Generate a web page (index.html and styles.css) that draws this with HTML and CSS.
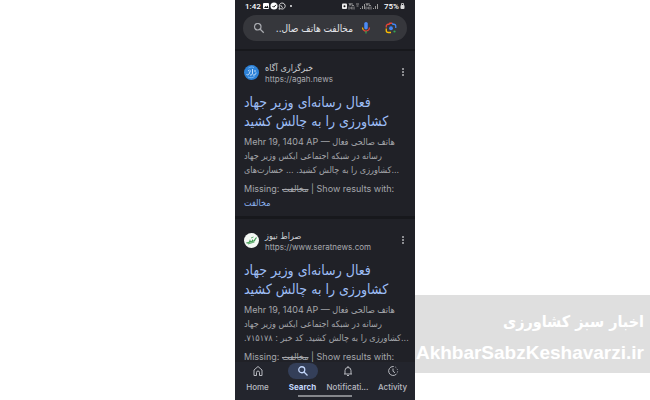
FILE: index.html
```
<!DOCTYPE html>
<html lang="en">
    <head>
        <meta charset="UTF-8" />
        <meta name="viewport" content="width=device-width, initial-scale=1.0" />
        <title>Search</title>
        <link rel="stylesheet" href="styles.css">
    </head>
    <body>
        <div class="phone">
            <header class="top">
                <div class="status">
                    <span>1:42</span>
                    <svg class="status-left" viewBox="0 0 32 8">
                        <rect x="0" y="1" width="6" height="6" rx="1" fill="#fff" />
                        <path d="M1 6l1.500-2 1 1 1-1.500L5.500 6z" fill="#111" />
                        <circle cx="11" cy="4" r="3.500" fill="#fff" />
                        <path d="M9.500 4l1.200 1.200L13 2.800" fill="none" stroke="#111" />
                        <path d="M16 7.200l.5-1.800a3 3 0 1 1 1.300 1.300z" fill="none" stroke="#fff" stroke-width=".8" />
                        <path d="M17.800 3c.2 1.500 1 2.200 2.200 2.400" fill="none" stroke="#fff" stroke-width=".8" />
                        <circle cx="28" cy="4" r=".9" fill="#fff" />
                    </svg>
                    <svg class="status-right" viewBox="0 0 40 8">
                        <rect x="0" y="1.500" width="5" height="5.500" rx="1" fill="#eee" />
                        <circle cx="2.500" cy="4.300" r="1" fill="#111" />
                        <g fill="none" stroke="#aaa" stroke-width=".8">
                            <path d="M7 1l1 2.500L9 1M10 1v2.500h2M7 4.500v3M8 6h2M10 4.500v3M12 4.500v3" />
                            <path d="M14 2h3M14.500 4h2" />
                            <path d="M24 1l1 2.500L26 1M27 1v2.500h2M24 4.500v3M25 6h2M27 4.500v3M29 4.500v3" />
                        </g>
                        <path d="M18 7h1V6h-1zM20 7h1V4h-1zM22 7h1V2h-1zM31 7h1V6h-1zM33 7h1V4h-1zM35 7h1V2h-1z" fill="#999" />
                    </svg>
                    <span>75%</span>
                    <svg class="battery" viewBox="0 0 5 8">
                        <rect x=".5" y="3" width="4" height="4" rx="1" fill="#ddd" />
                        <path d="M1.500 3V1.500h2V3" fill="none" stroke="#ddd" stroke-width=".8" />
                    </svg>
                </div>
                <form class="search">
                    <svg class="search-icon" viewBox="0 0 24 24" fill="none" stroke="#a9abb0" stroke-width="2.400">
                        <circle cx="9.500" cy="9.500" r="6.500" />
                        <path d="M14.500 14.500l7 7" />
                    </svg>
                    <input class="search-input" type="text" dir="rtl" aria-label="Search" value="مخالفت هاتف صال.." />
                    <button class="icon-btn" type="button" aria-label="Voice search">
                        <svg viewBox="0 0 24 24">
                            <rect x="8.500" y="0" width="7" height="15" rx="3.500" fill="#4c8bf5" />
                            <path d="M5 11a7 7 0 0 0 2 5" fill="none" stroke="#f5b400" stroke-width="2.400" />
                            <path d="M7 16a7 7 0 0 0 12-5" fill="none" stroke="#ea4335" stroke-width="2.400" />
                            <path d="M12 18v5" stroke="#34a853" stroke-width="2.400" />
                        </svg>
                    </button>
                    <button class="icon-btn" type="button" aria-label="Search by image">
                        <svg viewBox="0 0 24 24" fill="none" stroke-width="2.600">
                            <path d="M2.500 11V8.500a4 4 0 0 1 4-4H8L9.500 2.500h5" stroke="#ea4335" />
                            <path d="M14.500 2.500L16 4.500h1.500a4 4 0 0 1 4 4V12" stroke="#4285f4" />
                            <path d="M2.500 13v4a4 4 0 0 0 4 4H12" stroke="#fbbc04" />
                            <circle cx="12" cy="12.500" r="3.800" fill="#4285f4" />
                            <circle cx="19" cy="19" r="2.200" fill="#34a853" />
                        </svg>
                    </button>
                </form>
            </header>

            <main class="results">
                <article class="result">
                    <div class="source">
                        <svg class="favicon" viewBox="0 0 30 30">
                            <circle cx="15" cy="15" r="15" fill="#2d82d8" />
                            <g fill="none" stroke="#e3f1ff" stroke-width="1.600">
                                <path d="M5 19c3 2 5 0 6-3l2-5M12 20c3 1 5-1 5-4V8M18 20c3 1 6-1 6-5M22 10v4M8 12l3-2" />
                                <path d="M8 24c4 2 9 2 13-1M9 6c3-2 7-3 11-1" stroke="#8cc1f4" />
                            </g>
                        </svg>
                        <div class="source-text">
                            <span class="site fa">خبرگزاری آگاه</span>
                            <a class="url" href="#">https://agah.news</a>
                        </div>
                        <button class="more" type="button" aria-label="More options">
                            <svg viewBox="0 0 4 10" fill="#b0b2b6">
                                <circle cx="2" cy="2" r="1" />
                                <circle cx="2" cy="5" r="1" />
                                <circle cx="2" cy="8" r="1" />
                            </svg>
                        </button>
                    </div>
                    <h2 class="title"><a href="#">فعال رسانه‌ای وزیر جهاد<br>کشاورزی را به چالش کشید</a></h2>
                    <p class="snippet">
                        Mehr 19, 1404 AP — <span class="fa">هاتف صالحی فعال</span><br>
                        <span class="fa">رسانه در شبکه اجتماعی ایکس وزیر جهاد</span><br>
                        <span class="fa">کشاورزی را به چالش کشید. ... خسارت‌های...</span>
                    </p>
                    <p class="missing">
                        Missing: <s class="fa">مخالفت</s> | Show results with:<br>
                        <a class="fa" href="#">مخالفت</a>
                    </p>
                </article>

                <article class="result">
                    <div class="source">
                        <svg class="favicon" viewBox="0 0 30 30">
                            <circle cx="15" cy="15" r="15" fill="#f4f8f4" />
                            <g fill="none" stroke="#3d9a50" stroke-width="2.400">
                                <path d="M5 19c3 2 6 0 7-3 1 3 4 2 5-1 1 2 4 1 5-2l3-4" />
                                <path d="M8 22l13-4M14 10l5-2" stroke-width="1.600" />
                            </g>
                        </svg>
                        <div class="source-text">
                            <span class="site fa">صراط نیوز</span>
                            <a class="url" href="#">https://www.seratnews.com</a>
                        </div>
                        <button class="more" type="button" aria-label="More options">
                            <svg viewBox="0 0 4 10" fill="#b0b2b6">
                                <circle cx="2" cy="2" r="1" />
                                <circle cx="2" cy="5" r="1" />
                                <circle cx="2" cy="8" r="1" />
                            </svg>
                        </button>
                    </div>
                    <h2 class="title"><a href="#">فعال رسانه‌ای وزیر جهاد<br>کشاورزی را به چالش کشید</a></h2>
                    <p class="snippet">
                        Mehr 19, 1404 AP — <span class="fa">هاتف صالحی فعال</span><br>
                        <span class="fa">رسانه در شبکه اجتماعی ایکس وزیر جهاد</span><br>
                        <span class="fa">کشاورزی را به چالش کشید. کد خبر : ۷۱۵۱۷۸.&rlm;<bdo dir="ltr">...</bdo></span>
                    </p>
                    <p class="missing">
                        Missing: <s class="fa">مخالفت</s> | Show results with:
                    </p>
                </article>
            </main>

            <nav class="tabs">
                <a class="tab" href="#">
                    <svg viewBox="0 0 24 24" fill="none" stroke="currentColor" stroke-width="2">
                        <path d="M4 10l8-7 8 7v11h-5v-6a3 3 0 0 0-6 0v6H4z" />
                    </svg>
                    <span>Home</span>
                </a>
                <a class="tab active" href="#">
                    <svg viewBox="0 0 24 24" fill="none" stroke="currentColor" stroke-width="2.600">
                        <circle cx="9.500" cy="9.500" r="6" />
                        <path d="M14 14l7 7" />
                    </svg>
                    <span>Search</span>
                </a>
                <a class="tab" href="#">
                    <svg viewBox="0 0 24 24" fill="none" stroke="currentColor" stroke-width="2">
                        <path d="M4 18h16M6 18v-7a6 6 0 0 1 12 0v7M12 5V2M10 21h4" />
                    </svg>
                    <span>Notificati...</span>
                </a>
                <a class="tab" href="#">
                    <svg viewBox="0 0 24 24" fill="none" stroke="currentColor" stroke-width="2">
                        <path d="M12 3a9 9 0 1 0 6.500 15.500M12 7v5.500l4 3" />
                        <path d="M12 3a9 9 0 0 1 6.500 15.500" stroke-dasharray="2 3" />
                    </svg>
                    <span>Activity</span>
                </a>
            </nav>
            <div class="handle"></div>
        </div>

        <div class="watermark">
            <span class="brand">اخبار سبز کشاورزی</span>
            <span class="domain">AkhbarSabzKeshavarzi.ir</span>
        </div>
    </body>
</html>
```
FILE: styles.css
```
body {
    margin: 0;
    height: 100vh;
    display: grid;
    grid-template-columns: 1fr 180px 1fr;
    background-color: #ffffff;
    font-family: Roboto, "DejaVu Sans", sans-serif;
    overflow: hidden;
}
a {
    color: inherit;
    text-decoration: none;
}
button {
    padding: 0;
    border: none;
    background: none;
    cursor: pointer;
}
svg {
    display: block;
}
.fa {
    font-family: "DejaVu Sans Condensed", "DejaVu Sans", sans-serif;
    font-size: 9px;
}
.phone {
    grid-column: 2;
    display: flex;
    flex-direction: column;
    height: 100vh;
    background-color: #17181c;
    color: #a4a6ab;
}
.top {
    padding: 0 8px 8px;
    background-color: #202127;
}
.status {
    display: flex;
    align-items: center;
    height: 12px;
    padding: 0 2px;
    font-size: 8px;
    font-weight: 500;
    color: #ffffff;
}
.status-left {
    width: 32px;
    height: 8px;
    margin-left: 2px;
}
.status-right {
    width: 40px;
    height: 8px;
    margin-left: auto;
    margin-right: 2px;
}
.battery {
    width: 5px;
    height: 8px;
    margin-left: 1px;
}
.search {
    display: flex;
    align-items: center;
    gap: 7px;
    height: 26px;
    margin-top: 3px;
    padding: 0 10px;
    border-radius: 13px;
    background-color: #36373c;
}
.search-icon {
    flex: none;
    width: 12px;
    height: 12px;
}
.search-input {
    flex: 1;
    min-width: 0;
    padding: 0;
    border: none;
    outline: none;
    background: none;
    color: #e2e4e8;
    font-family: "DejaVu Sans Condensed", "DejaVu Sans", sans-serif;
    font-size: 10px;
}
.icon-btn svg {
    width: 12px;
    height: 12px;
}
.icon-btn + .icon-btn {
    margin-left: 6px;
}
.results {
    flex: 1;
    min-height: 0;
    overflow: hidden;
    padding-top: 2px;
}
.result {
    padding: 12px 10px 6px 9px;
    margin-bottom: 3px;
    background-color: #202127;
}
.source {
    display: flex;
    align-items: flex-start;
    gap: 6px;
}
.favicon {
    width: 15px;
    height: 15px;
    margin-top: 2px;
}
.source-text {
    display: flex;
    flex-direction: column;
    flex: 1;
    line-height: 11px;
}
.site {
    color: #cdcfd3;
}
.url {
    font-family: Inter, Roboto, sans-serif;
    font-size: 8px;
    color: #a9abb0;
}
.more {
    width: 4px;
    height: 14px;
    margin-top: 2px;
}
.more svg {
    width: 4px;
    height: 10px;
}
.title {
    margin: 8px 0 4px;
    font-family: "DejaVu Sans Condensed", "DejaVu Sans", sans-serif;
    font-size: 14px;
    line-height: 19px;
    font-weight: normal;
    white-space: nowrap;
    color: #9dbdf5;
}
.snippet,
.missing {
    margin: 0;
    font-family: Inter, Roboto, sans-serif;
    font-size: 9px;
    line-height: 14px;
    white-space: nowrap;
}
.missing {
    margin-top: 5px;
}
.missing a {
    color: #8ab0ee;
}
.tabs {
    display: grid;
    grid-template-columns: repeat(4, 1fr);
    background-color: #23252d;
}
.tab {
    display: flex;
    flex-direction: column;
    align-items: center;
    gap: 2px;
    font-family: Inter, Roboto, sans-serif;
    font-size: 8px;
    font-weight: 500;
    line-height: 12px;
    color: #b8bac0;
}
.tab svg {
    width: 12px;
    height: 12px;
    margin-top: 1px;
    padding: 2px 9px;
    border-radius: 8px;
}
.active {
    font-weight: 700;
    color: #c3d7fb;
}
.active svg {
    background-color: #343f59;
}
.handle {
    height: 7px;
    background: linear-gradient(#85878c, #85878c) center 2px / 54px 2px no-repeat #23252d;
}
.watermark {
    align-self: end;
    display: flex;
    flex-direction: column;
    align-items: flex-end;
    box-sizing: border-box;
    height: 78px;
    margin-bottom: 27px;
    padding: 12px 6px 0 0;
    background-color: #dfdfdf;
    color: #ffffff;
    font-weight: bold;
    white-space: nowrap;
}
.brand {
    font-family: "DejaVu Sans Condensed", "DejaVu Sans", sans-serif;
    font-size: 16px;
    line-height: 30px;
}
.domain {
    font-family: "Liberation Sans", Arial, sans-serif;
    font-size: 19px;
    line-height: 32px;
}
```
